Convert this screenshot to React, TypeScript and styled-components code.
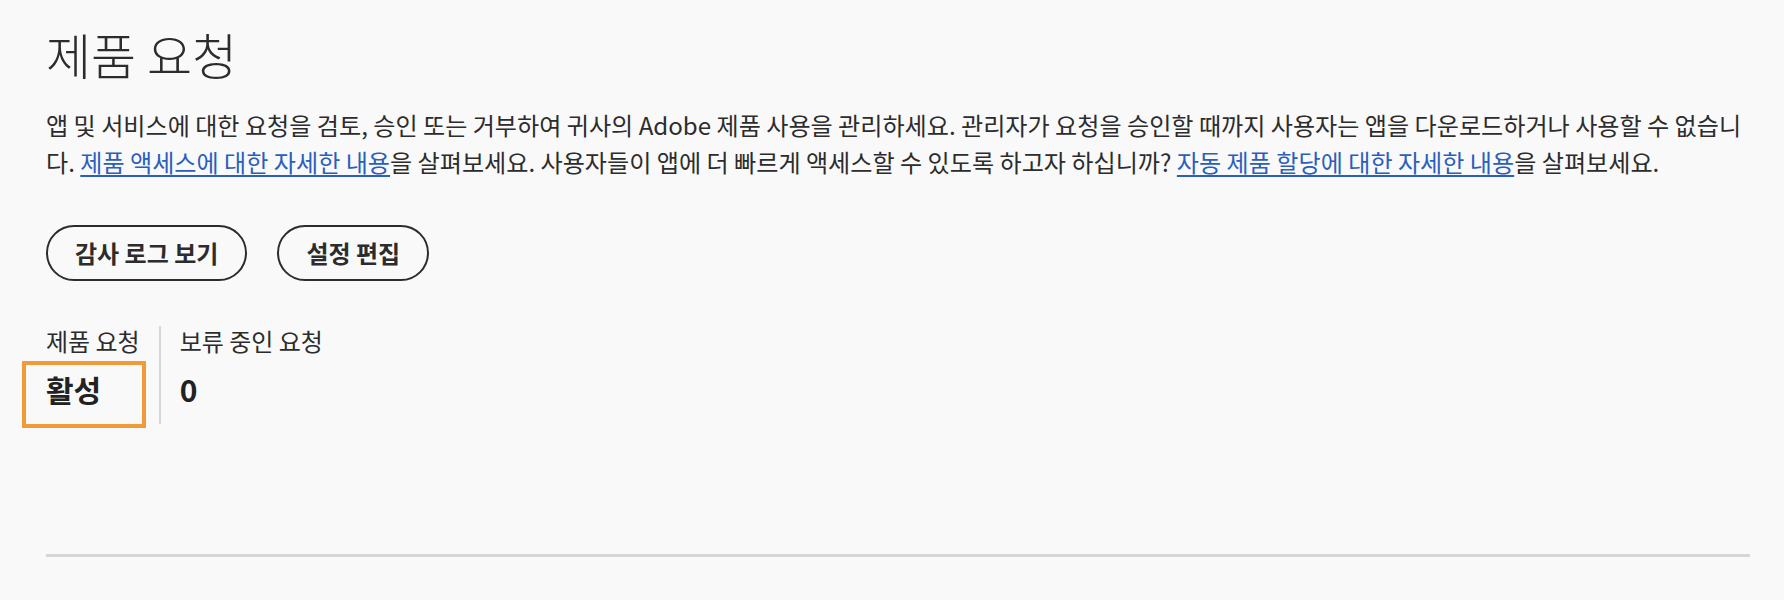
import styled, { createGlobalStyle } from "styled-components";

const GlobalStyle = createGlobalStyle`
  html, body {
    margin: 0;
    padding: 0;
    background: #f9f9f9;
  }
  body {
    font-family: "Noto Sans CJK KR", "Noto Sans", "Liberation Sans", sans-serif;
    color: #2c2c2c;
  }
  * {
    box-sizing: border-box;
  }
`;

const Page = styled.main`
  padding: 25px 34px 40px 46px;
`;

const Title = styled.h1`
  margin: 0;
  font-size: 49px;
  line-height: 1.2;
  font-weight: 300;
  color: #2c2c2c;
`;

const Intro = styled.p`
  margin: 22px 0 0;
  max-width: 1700px;
  font-size: 24.1px;
  line-height: 37px;
  color: #2c2c2c;
`;

const TextLink = styled.a`
  color: #2a5fbd;
  text-decoration: underline;
  text-underline-offset: 3px;
  cursor: pointer;
`;

const Actions = styled.div`
  display: flex;
  gap: 30px;
  margin-top: 45px;
`;

const PillButton = styled.button`
  height: 56px;
  padding: 0 27px;
  border: 2px solid #2c2c2c;
  border-radius: 28px;
  background: transparent;
  font-family: inherit;
  font-size: 24px;
  font-weight: 700;
  color: #2c2c2c;
  cursor: pointer;
`;

const Stats = styled.div`
  display: flex;
  margin-top: 45px;
`;

const StatColumn = styled.div<{ $divider?: boolean }>`
  position: relative;
  display: flex;
  flex-direction: column;
  padding: 0 19px 17px ${(p) => (p.$divider ? "0" : "19px")};
  border-right: ${(p) => (p.$divider ? "2px solid #d6d6d6" : "none")};
`;

const StatLabel = styled.div`
  font-size: 24px;
  line-height: 30px;
  color: #2c2c2c;
`;

const StatValue = styled.div`
  position: relative;
  margin-top: 15px;
  font-size: 30px;
  line-height: 36px;
  font-weight: 700;
  color: #222;
`;

const FocusRing = styled.span`
  position: absolute;
  left: -24px;
  top: -10px;
  width: 124px;
  height: 67px;
  border: 4px solid #f19a3a;
  pointer-events: none;
`;

const Rule = styled.hr`
  margin: 130px 0 0;
  border: none;
  height: 3px;
  background: #d6d6d6;
`;

export default function App() {
  return (
    <>
      <GlobalStyle />
      <Page>
        <Title>제품 요청</Title>
        <Intro>
          앱 및 서비스에 대한 요청을 검토, 승인 또는 거부하여 귀사의 Adobe 제품 사용을 관리하세요. 관리자가 요청을
          승인할 때까지 사용자는 앱을 다운로드하거나 사용할 수 없습니다.{" "}
          <TextLink>제품 액세스에 대한 자세한 내용</TextLink>을 살펴보세요. 사용자들이 앱에 더 빠르게 액세스할 수
          있도록 하고자 하십니까? <TextLink>자동 제품 할당에 대한 자세한 내용</TextLink>을 살펴보세요.
        </Intro>
        <Actions>
          <PillButton>감사 로그 보기</PillButton>
          <PillButton>설정 편집</PillButton>
        </Actions>
        <Stats>
          <StatColumn $divider>
            <StatLabel>제품 요청</StatLabel>
            <StatValue>
              활성
              <FocusRing />
            </StatValue>
          </StatColumn>
          <StatColumn>
            <StatLabel>보류 중인 요청</StatLabel>
            <StatValue>0</StatValue>
          </StatColumn>
        </Stats>
        <Rule />
      </Page>
    </>
  );
}
